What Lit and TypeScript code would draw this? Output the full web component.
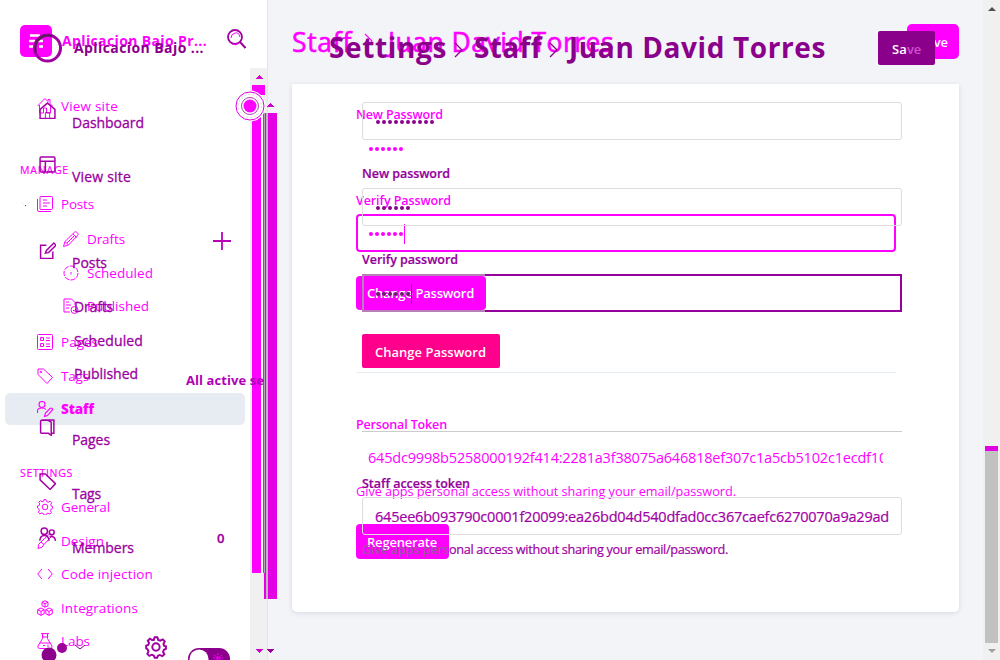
import { LitElement, html, css, svg } from "lit";
import { customElement, property } from "lit/decorators.js";

/** A run of text spaced so that it fills a given width. */
@customElement("fit-text")
class FitText extends LitElement {
  @property({ type: Number }) w = 0;
  @property() text = "";
  static styles = css`
    :host { display: inline-block; white-space: pre; flex: none; }
    span { display: inline-block; white-space: pre; }
  `;
  render() { return html`<span>${this.text}</span>`; }
  updated() {
    const s = this.renderRoot.querySelector("span") as HTMLElement;
    s.style.letterSpacing = "0px";
    const natural = s.getBoundingClientRect().width;
    if (natural) s.style.letterSpacing = (this.w - natural) / this.text.length + "px";
  }
}

const t = (text: string, w: number, cls = "") => html`<fit-text class=${cls} .text=${text} .w=${w}></fit-text>`;

const icons: Record<string, unknown> = {
  home: svg`<path d="M.5 8 8 .5l3 3V1.5h2v4L15.500 8M2.500 7v8h4v-5h3v5h4V7"/>`,
  posts: svg`<rect x="3" y=".5" width="12.500" height="13" rx="1"/><path d="M.5 3v11q0 1.500 1.500 1.500h12M6 4h4M6 7h7M6 10h4"/>`,
  pencil: svg`<path d="M.5 15.500 2 10.500 11.500 1.200q1-1 2.200 0l1 1q1 1 0 2.200L5.500 14ZM10 3l3.500 3.500M2 10.500 5.500 14M4 12l8-8"/>`,
  clock: svg`<circle cx="8" cy="8" r="7" stroke-dasharray="5 1.300"/><path d="M8 7v2.500"/>`,
  published: svg`<path d="M7 14H1V1h7.500L12 4.500V7M3 4h3M3 7h5M3 10h3"/><circle cx="11.500" cy="12" r="3.500"/><path d="m10 12 1.200 1.200L13 11"/>`,
  pages: svg`<rect x=".5" y=".5" width="15" height="15" rx="1"/><path d="M3.500 3.500h3v3h-3zM3.500 9.500h3v3h-3zM9 4h4M9 6.500h4M9 10h4M9 12.500h4"/>`,
  tag: svg`<path d="M1 1h5.500l9 8.500-5.500 6L1 6.500Z"/><circle cx="4" cy="4" r=".8"/>`,
  staff: svg`<circle cx="5" cy="3.500" r="3"/><path d="M.5 12V10q0-3 4.500-3 3 0 4 1.500M7.500 15.500l1-3.500 4.500-4.500q1-1 2 0t0 2L10.500 14.500Z"/>`,
  gear: svg`<path d="M6.300 2.600 7 .6h2l.7 2 1.500.6 2-1 1.500 1.500-1 2 .6 1.500 1.300.3v2l-1.600.7-.6 1.500 1 1.800-1.600 1.500-1.900-.9-1.400.6-.6 1.500H7l-.7-1.700-1.500-.6-1.900.9-1.500-1.500.9-1.800-.6-1.500L.5 9V7l1.600-.6.6-1.500-.9-1.700 1.500-1.500 1.700.9Z"/><circle cx="8" cy="8" r="2.800"/>`,
  design: svg`<path d="M1 15.500q0-5 3-6.500l3 2.500Q6 15 1 15.500ZM4 9 12.500.8q2 0 2.500 2L7 11.500"/>`,
  code: svg`<path d="M5 3 .7 8 5 13M11 3l4.300 5L11 13"/>`,
  boxes: svg`<path d="M8 .7l3 1.500v3.500L8 7.200 5 5.700V2.200ZM5 2.200 8 3.700l3-1.500M8 3.700v3.500M4 8l3.200 1.700v4L4 15.400.7 13.700v-4ZM.7 9.700 4 11.400l3.200-1.700M4 11.400v4M12 8l3.300 1.700v4L12 15.400l-3.200-1.700v-4ZM8.800 9.700l3.200 1.700 3.300-1.700M12 11.400v4"/>`,
  flask: svg`<path d="M4 .6h8M5.500.6v5L1 13q-.5 2.500 1.500 2.500h11Q15.500 15 15 13l-4.500-7.400v-5M5.500 4h5M3 10h10M6 12.500h2M11 11.500v2.500"/>`,
  house: svg`<path d="M1 7v8.500h14V7L8 1Z"/><path d="M6 15v-5h4v5" stroke-width=".8"/>`,
  layout: svg`<rect x="1" y="1" width="14" height="14" rx="1"/><path d="M1 5h14M6 5v10"/>`,
  edit: svg`<path d="M7 3H1.500v12.500H13V9M6 10.500 7 8l7-7 2 2-7 7Z"/>`,
  book: svg`<path d="M2.500 1H14v12.500h-2.500M2.500 1.200h6l3 1.800v12.300L8.800 13.500H2.500q-1 0-1-1V2.200q0-1 1-1Z"/>`,
  label: svg`<path d="M1 1h5l9.500 9-5 5.500L1 6.500Z"/>`,
  members: svg`<circle cx="5" cy="4" r="3"/><circle cx="12" cy="5" r="2.300"/><path d="M.8 13Q1 8 5 8t4.500 5M10 9q5-1 5.500 4"/>`,
};
const icon = (n: string, cls = "") => html`<svg class="icon ${cls}" viewBox="0 0 16 16">${icons[n]}</svg>`;

type Row = { c: number; text: string; w: number; icon?: string; kind?: string; extra?: unknown };

const before: Row[] = [
  { c: 106, text: "View site", w: 57, icon: "home" },
  { c: 170, text: "MANAGE", w: 49, kind: "heading" },
  { c: 204, text: "Posts", w: 33, icon: "posts" },
  { c: 239, text: "Drafts", w: 38, icon: "pencil", kind: "sub" },
  { c: 273, text: "Scheduled", w: 66, icon: "clock", kind: "sub" },
  { c: 306, text: "Published", w: 62, icon: "published", kind: "sub" },
  { c: 342, text: "Pages", w: 37, icon: "pages" },
  { c: 376, text: "Tags", w: 28, icon: "tag" },
  { c: 409, text: "Staff", w: 33, icon: "staff", kind: "active" },
  { c: 473, text: "SETTINGS", w: 53, kind: "heading" },
  { c: 507, text: "General", w: 49, icon: "gear" },
  { c: 541, text: "Design", w: 43, icon: "design" },
  { c: 574, text: "Code injection", w: 92, icon: "code" },
  { c: 608, text: "Integrations", w: 77, icon: "boxes" },
  { c: 641, text: "Labs", w: 29, icon: "flask" },
];
const after: Row[] = [
  { c: 123, text: "Dashboard", w: 72, icon: "house" },
  { c: 177, text: "View site", w: 59, icon: "layout" },
  { c: 263, text: "Posts", w: 35, icon: "edit", extra: html`<svg class="plus" viewBox="0 0 18 18"><path d="M9 0v18M0 9h18"/></svg>` },
  { c: 307, text: "Drafts", w: 39, kind: "sub" },
  { c: 341, text: "Scheduled", w: 69, kind: "sub" },
  { c: 374, text: "Published", w: 64, kind: "sub", extra: html`<fit-text class="all" .text=${"All active se"} .w=${78}></fit-text>` },
  { c: 440, text: "Pages", w: 38, icon: "book" },
  { c: 494, text: "Tags", w: 29, icon: "label" },
  { c: 548, text: "Members", w: 62, icon: "members", extra: html`<span class="count">0</span>` },
];

const ROW = 34;
const rows = (list: Row[]) =>
  list.map((r, i) => {
    const prev = i ? list[i - 1].c + ROW / 2 : 84;
    return html`<div class="row ${r.kind ?? ""}" style="margin-top:${r.c - ROW / 2 - prev}px">
      ${r.icon ? icon(r.icon) : ""}${t(r.text, r.w)}${r.extra ?? ""}
    </div>`;
  });

const dots = (n: number, caret = false) => html`<span class="dots">${Array.from({ length: n }, () => html`<i></i>`)}</span>${caret ? html`<span class="caret"></span>` : ""}`;
const chevron = html`<svg class="chev" viewBox="0 0 10 16"><path d="m1 1 7 7-7 7"/></svg>`;

@customElement("app-root")
class AppRoot extends LitElement {
  static styles = css`
    :host { display: block; width: 1000px; height: 660px; overflow: hidden; position: relative; background: #f2f4f8; font: 14px/20px "Open Sans", "Noto Sans", sans-serif; }
    * { box-sizing: border-box; }
    svg { display: block; flex: none; fill: none; stroke: currentColor; }
    .page, .layer { width: 1000px; height: 660px; display: grid; grid-template-columns: 268px 1fr; }
    .page { grid-template-columns: 268px 715px 17px; }
    .layer { position: absolute; inset: 0; overflow: hidden; }
    .side { background: #fff; border-right: 1px solid #e2e5eb; padding-top: 68px; display: flex; justify-content: flex-end; }
    .track { width: 17px; background: #f0f0f0; }
    .work { padding: 84px 24px 48px; }
    .card { height: 528px; background: #fff; border-radius: 0 0 5px 5px; box-shadow: 0 1px 5px rgba(40,50,80,.13); }
    .bar { background: #f0f0f0; display: flex; flex-direction: column; align-items: center; padding-top: 7px; }
    .up, .down { width: 0; height: 0; border: 4px solid transparent; flex: none; }
    .up { border-top: 0; border-bottom-color: #505050; }
    .down { border-bottom: 0; border-top-color: #a0a0a0; }
    .thumb { width: 13px; height: 197px; margin: 435px 0 6px; background: #c1c1c1; border-top: 5px solid #e400e4; }

    .a { color: #f0f; } .b { color: #8b008b; }
    .nav { display: flex; flex-direction: column; }
    .brand { height: 84px; display: flex; align-items: flex-start; font-weight: 700; flex: none; }
    .a .brand { padding: 25px 0 0 20px; gap: 10px; }
    .b .brand { padding: 33px 0 0 33px; gap: 11px; }
    .logo { width: 32px; height: 32px; border-radius: 5px; background: #f0f; }
    .ring { width: 30px; height: 30px; }
    .a .brand fit-text { margin-top: 6px; font-size: 14px; }
    .b .brand fit-text { margin-top: 5px; font-size: 14px; }
    .search { width: 19px; height: 20px; margin: -4px 0 0 12px; color: #a000a0; }
    .row { height: 34px; flex: none; display: flex; align-items: center; padding-left: 37px; font-size: 13.5px; }
    .icon { width: 16px; height: 16px; stroke-width: 1; margin-right: 8px; }
    .row.sub { padding-left: 63px; }
    .row.heading { padding-left: 20px; font-size: 10.5px; -webkit-text-stroke: .2px; }
    .row.active { height: 32px; margin-bottom: 2px; font-weight: 800; width: 240px; margin-left: 5px; padding-left: 32px; background: #e7ecf3; border-radius: 5px; position: relative; top: 1px; }
    .row.active .icon { stroke-width: 1.1; }
    .b .row { padding-left: 72px; font-size: 14px; color: #9b009f; -webkit-text-stroke: .3px; }
    .b .row .icon { margin: 0 16.500px 25px -33.500px; width: 17px; height: 17px; stroke-width: 1.4; color: #a800a8; }
    .b .row.sub { padding-left: 74px; }
    .b .plus { width: 18px; height: 18px; stroke-width: 1.8; margin: 0 0 44px 106px; color: #b800b8; }
    .all { font-size: 13px; font-weight: 700; margin: 12px 0 0 48px; color: #b000b7; -webkit-text-stroke: 0; }
    .count { font-size: 13px; font-weight: 600; margin: 0 0 20px 83px; }
    .foot { display: flex; align-items: flex-start; margin-top: 71px; height: 24px; overflow: hidden; }
    .foot svg { width: 268px; height: 24px; }

    .top { height: 84px; display: flex; font-size: 26.5px; font-weight: 500; flex: none; line-height: 36px; }
    .a .top { padding: 24px 0 0 24px; -webkit-text-stroke: .6px; }
    .b .top { padding: 29px 0 0 61px; font-size: 28px; font-weight: 700; }
    .chev { width: 10px; height: 16px; stroke-width: 1.3; }
    .a .chev { margin: 9px 14px 0 12px; stroke-width: 1.1; }
    .b .chev { margin: 13px 10px 0 7px; }
    .title { display: flex; }
    .save { font-size: 13px; line-height: 20px; font-weight: 600; color: #fff; display: flex; align-items: center; -webkit-text-stroke: 0; }
    .a .save { background: #f0f; width: 52px; height: 35px; border-radius: 5px; margin-left: 293px; padding-left: 12px; }
    .b .save { background: #8b008b; width: 57px; height: 34px; border-radius: 2px; margin: 2px 0 0 52px; padding: 2px 0 0 14px; }
    .mix { color: #d050cd; }

    .form { display: flex; flex-direction: column; align-items: flex-start; width: 540px; }
    .a .form { margin-left: 88px; } .b .form { margin-left: 94px; }
    .label { height: 20px; padding-top: 1px; font-weight: 600; font-size: 12.5px; display: block; }
    .b .label { color: #94009a; -webkit-text-stroke: .2px; }
    .input { width: 540px; height: 38px; border: 1px solid #ddd; border-radius: 3px; display: flex; align-items: center; padding: 2px 0 0 12px; overflow: hidden; font-size: 14.5px; }
    .a .input { border-color: transparent; padding-left: 11px; }
    .h36 { height: 36px; }
    .a .h36 { padding-top: 2px; }
    .focus, .a .focus { border: 2px solid currentColor; padding-left: 11px; border-radius: 4px; }
    .a .focus { border-color: currentColor; padding-left: 10px; }
    .b .focus { border-radius: 2px; }
    .b .focus.over { border-image: linear-gradient(90deg, #b580b5 0 123px, #94009a 123px) 2; }
    .dots { display: flex; gap: 2px; padding-left: 1px; }
    .dots i { width: 4px; height: 4px; border-radius: 50%; background: currentColor; }
    .caret { width: 1px; height: 20px; margin-left: 1px; background: currentColor; }
    .over .dots, .over .caret { color: #662066; }
    .clip { width: 515px; overflow: hidden; display: flex; }
    .btn { height: 34px; display: flex; align-items: center; color: #fff; font-weight: 600; font-size: 13px; border-radius: 4px; background: #f0f; padding-left: 11px; }
    .rule { width: 540px; height: 1px; background: #e5ecf2; }
    .help { height: 20px; font-size: 12.7px; white-space: pre; display: flex; }
    .b .help, .b .input fit-text { color: #a000a5; -webkit-text-stroke: .2px; }
    .b .help .dim { color: #9a5a9a; }
    .m4 { margin-top: 4px; } .m5 { margin-top: 5px; } .m6 { margin-top: 6px; } .m18 { margin-top: 18px; }
    .m20 { margin-top: 20px; } .m22 { margin-top: 22px; } .m23 { margin-top: 23px; } .m24 { margin-top: 24px; }
    .m41 { margin-top: 41px; } .m62 { margin-top: 62px; } .m63 { margin-top: 63px; }
    .w130 { width: 130px; } .w93 { width: 93px; height: 35px; }
    .pink { width: 138px; background: #ff008c; border-radius: 2px; padding: 2px 0 0 13px; }
    .grey { background: #ccc; }
    .rails { position: absolute; left: 0; top: 0; width: 290px; height: 660px; stroke: none; }
  `;

  render() {
    return html`
      <div class="page">
        <div class="side"><div class="track"></div></div>
        <div class="work"><div class="card"></div></div>
        <div class="bar"><span class="up"></span><span class="thumb"></span><span class="down"></span></div>
      </div>
      <svg class="rails" viewBox="0 0 290 660" shape-rendering="crispEdges">
        <path fill="#ff00ff" d="M252 85h13v10h-13zM252 95h9v478h-9zM263 113h1v460h-1z"/>
        <path fill="#fff" d="M261 95h2v478h-2z"/>
        <path fill="#bda0bd" d="M264 113h1v460h-1z"/>
        <path fill="#e400e4" d="M265 113h12v486h-12zM264 573h1v26h-1z"/>
        <path fill="#c1b5c1" d="M266 113h2v486h-2z"/>
        <path fill="#d000d0" d="M255 79l4-4 4 4zM266 107l4-4 4 4zM255 649h8l-4 4z"/>
        <path fill="#9b009b" d="M266 649h8l-4 4z"/>
        <g shape-rendering="auto">
          <circle cx="250" cy="106" r="15.500" fill="#fff"/>
          <circle cx="250" cy="106" r="14" fill="none" stroke="#e000e0"/>
          <circle cx="250" cy="106" r="11.500" fill="none" stroke="#ddd" stroke-dasharray="2 2"/>
          <circle cx="250" cy="106" r="8.500" fill="none" stroke="#b040b0"/>
          <circle cx="250" cy="106" r="6.500" fill="#f0f"/>
        </g>
        <path fill="#eee" d="m21 202 4 4 5-4v1l-5 4-4-4z"/>
        <path fill="#d000d0" d="M25 205h1v1h-1z"/>
      </svg>
      <div class="layer a">
        <div class="nav">
          <div class="brand">
            <svg class="logo" viewBox="0 0 32 32"><path stroke="#fff" stroke-width="2.500" d="M10 10.500h10M9 16h6M18 16h5M9 21.500h7M19 21.500h4"/></svg>
            ${t("Aplicacion Bajo Pr...", 145)}
          </div>
          ${rows(before)}
        </div>
        <div>
          <div class="top">
            <div class="title">${t("Staff", 60)}${chevron}${t("Juan David Torres", 226)}</div>
            <div class="save">${t("Save", 29)}</div>
          </div>
          <div class="form">
            <span class="label m20">${t("New Password", 87)}</span>
            <div class="input h36 m6">${dots(6)}</div>
            <span class="label m24">${t("Verify Password", 95)}</span>
            <div class="input focus m4">${dots(6, true)}</div>
            <div class="btn w130 m24">${t("Change Password", 107)}</div>
            <div class="rule m62"></div>
            <span class="label m41">${t("Personal Token", 91)}</span>
            <div class="input h36 m5"><span class="clip">${t("645dc9998b5258000192f414:2281a3f38075a646818ef307c1a5cb5102c1ecdf10", 519)}</span></div>
            <div class="help m6">${t("Give apps personal access without sharing your email/password.", 380)}</div>
            <div class="btn w93 m23">${t("Regenerate", 70)}</div>
          </div>
        </div>
      </div>
      <div class="layer b">
        <div class="nav">
          <div class="brand">
            <svg class="ring" viewBox="0 0 30 30"><circle cx="14.500" cy="15" r="13" stroke="#a000a0" stroke-width="3"/><path stroke="#4f2450" stroke-width="2" d="M19 3A13 13 0 0 0 3 19"/></svg>
            ${t("Aplicacion Bajo ...", 130)}
            <svg class="search" viewBox="0 0 19 20"><circle cx="8" cy="8" r="7" stroke-width="1.800"/><path d="m13 13 5.500 6" stroke-width="2"/><path d="M4 9q0-4 4-5t5 4M5 15q4 2 7-1" stroke="#f0f"/></svg>
          </div>
          ${rows(after)}
          <div class="foot">
            <svg viewBox="0 636 268 24">
              <circle cx="49" cy="655" r="7.500" fill="#8b008b" stroke="none"/>
              <circle cx="62" cy="648" r="5" fill="#9b009b" stroke="none"/>
              <path d="m75 645 5 4 5-4"/>
              <g transform="translate(145.500 636.500) scale(1.310)" stroke="#a000a0" stroke-width="1.500">${icons.gear}</g>
              <rect x="188" y="648" width="42" height="22" rx="11" fill="#8b008b" stroke="none"/>
              <circle cx="199" cy="659" r="9.500" fill="#fff" stroke="none"/>
              <path stroke="#f0f" stroke-dasharray="2 1" d="M218 653v8M214 655l8 6M222 655l-8 6M213 658h10"/>
            </svg>
          </div>
        </div>
        <div>
          <div class="top">
            <div class="title">${t("Settings", 118)}${chevron}${t("Staff", 68)}${chevron}${t("Juan David Torres", 257)}</div>
            <div class="save">${t("Sa", 15)}<span class="mix">${t("ve", 14)}</span></div>
          </div>
          <div class="form">
            <div class="input m18">${dots(10)}</div>
            <span class="label m23">${t("New password", 88)}</span>
            <div class="input m5">${dots(6)}</div>
            <span class="label m23">${t("Verify password", 96)}</span>
            <div class="input focus over m5">${dots(6, true)}</div>
            <div class="btn pink m22">${t("Change Password", 111)}</div>
            <div class="rule grey m63"></div>
            <span class="label m41">${t("Staff access token", 108)}</span>
            <div class="input m4">${t("645ee6b093790c0001f20099:ea26bd04d540dfad0cc367caefc6270070a9a29ad", 514)}</div>
            <div class="help m4"><fit-text class="dim" .text=${"Give apps pers"} .w=${87}></fit-text>${t("onal access without sharing your email/password.", 279)}</div>
          </div>
        </div>
      </div>
    `;
  }
}
